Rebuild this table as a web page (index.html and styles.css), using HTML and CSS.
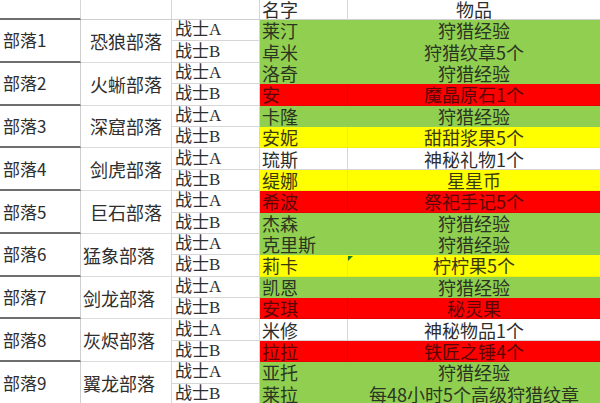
FILE: index.html
```html
<!DOCTYPE html>
<html lang="zh-CN">
<head>
<meta charset="utf-8">
<title>部落战士</title>
<link rel="stylesheet" href="styles.css">
</head>
<body>
<div class="sheet">
  <div class="cell head"></div>
  <div class="cell head"></div>
  <div class="cell head"></div>
  <div class="cell head hname">名字</div>
  <div class="cell head hitem">物品</div>

  <div class="cell tribe">部落1</div>
  <div class="cell clan">恐狼部落</div>
  <div class="cell role">战士A</div><div class="cell name green">莱汀</div><div class="cell item green">狩猎经验</div>
  <div class="cell role">战士B</div><div class="cell name green">卓米</div><div class="cell item green">狩猎纹章5个</div>

  <div class="cell tribe">部落2</div>
  <div class="cell clan">火蜥部落</div>
  <div class="cell role">战士A</div><div class="cell name green">洛奇</div><div class="cell item green">狩猎经验</div>
  <div class="cell role">战士B</div><div class="cell name red">安</div><div class="cell item red">魔晶原石1个</div>

  <div class="cell tribe">部落3</div>
  <div class="cell clan">深窟部落</div>
  <div class="cell role">战士A</div><div class="cell name green">卡隆</div><div class="cell item green">狩猎经验</div>
  <div class="cell role">战士B</div><div class="cell name yellow">安妮</div><div class="cell item yellow">甜甜浆果5个</div>

  <div class="cell tribe">部落4</div>
  <div class="cell clan">剑虎部落</div>
  <div class="cell role">战士A</div><div class="cell name white">琉斯</div><div class="cell item white">神秘礼物1个</div>
  <div class="cell role">战士B</div><div class="cell name yellow">缇娜</div><div class="cell item yellow">星星币</div>

  <div class="cell tribe">部落5</div>
  <div class="cell clan">巨石部落</div>
  <div class="cell role">战士A</div><div class="cell name red">希波</div><div class="cell item red">祭祀手记5个</div>
  <div class="cell role">战士B</div><div class="cell name green">杰森</div><div class="cell item green">狩猎经验</div>

  <div class="cell tribe">部落6</div>
  <div class="cell clan left">猛象部落</div>
  <div class="cell role">战士A</div><div class="cell name green">克里斯</div><div class="cell item green">狩猎经验</div>
  <div class="cell role">战士B</div><div class="cell name yellow">莉卡</div><div class="cell item yellow flag">柠柠果5个</div>

  <div class="cell tribe">部落7</div>
  <div class="cell clan left">剑龙部落</div>
  <div class="cell role">战士A</div><div class="cell name green">凯恩</div><div class="cell item green">狩猎经验</div>
  <div class="cell role">战士B</div><div class="cell name red">安琪</div><div class="cell item red">秘灵果</div>

  <div class="cell tribe">部落8</div>
  <div class="cell clan left">灰烬部落</div>
  <div class="cell role">战士A</div><div class="cell name white">米修</div><div class="cell item white">神秘物品1个</div>
  <div class="cell role">战士B</div><div class="cell name red">拉拉</div><div class="cell item red">铁匠之锤4个</div>

  <div class="cell tribe">部落9</div>
  <div class="cell clan left">翼龙部落</div>
  <div class="cell role">战士A</div><div class="cell name green">亚托</div><div class="cell item green">狩猎经验</div>
  <div class="cell role">战士B</div><div class="cell name green">莱拉</div><div class="cell item green">每48小时5个高级狩猎纹章</div>
</div>
</body>
</html>
```

FILE: styles.css
```css
html, body {
  margin: 0;
  padding: 0;
  width: 600px;
  height: 403px;
  overflow: hidden;
  background: #ffffff;
}

.sheet {
  display: grid;
  grid-template-columns: 81px 91px 88px 88px 1fr;
  grid-template-rows: 20px repeat(18, 21.4px);
  font-family: "Noto Sans CJK SC", "Noto Sans", sans-serif;
  font-size: 18px;
  color: #2e2e2e;
}

.cell {
  box-sizing: border-box;
  display: flex;
  align-items: center;
  line-height: 20px;
  white-space: nowrap;
  border-right: 1px solid #d6d6d6;
  border-bottom: 1px solid #d6d6d6;
}

.head {
  border-bottom: 1px solid #cfcfcf;
  align-items: flex-end;
  line-height: 19px;
}

.head:first-child {
  border-bottom: 2px solid #6e6e6e;
}

.hname {
  padding-left: 2px;
}

.hitem {
  justify-content: center;
  border-right: none;
}

.tribe {
  grid-row: span 2;
  padding-left: 3px;
  font-size: 17px;
  border-right: 1px solid #cfcfcf;
  border-bottom: 2px solid #6e6e6e;
}

.clan {
  grid-row: span 2;
  justify-content: center;
  border-bottom: 1px solid #dcdcdc;
}

.clan.left {
  justify-content: flex-start;
  padding-left: 2px;
}

.role {
  padding-left: 3px;
  font-family: "Liberation Serif", "Noto Sans CJK SC", serif;
  font-size: 17px;
}

.name {
  padding-left: 2px;
}

.item {
  justify-content: center;
  border-right: none;
}

.green {
  background: #90cf50;
  border-color: #90cf50;
  color: #2a3522;
}

.yellow {
  background: #ffff00;
  border-color: #f2f200;
  color: #3a3a10;
}

.red {
  background: #fe0000;
  border-color: #e80000;
  color: #5a0606;
}

.white {
  background: #ffffff;
}

.name.white {
  border-right: 1px solid #d6d6d6;
}

.flag {
  position: relative;
}

.flag::before {
  content: "";
  position: absolute;
  left: 0;
  top: 1px;
  width: 0;
  height: 0;
  border-top: 5px solid #1f7a2e;
  border-right: 5px solid transparent;
}
```
